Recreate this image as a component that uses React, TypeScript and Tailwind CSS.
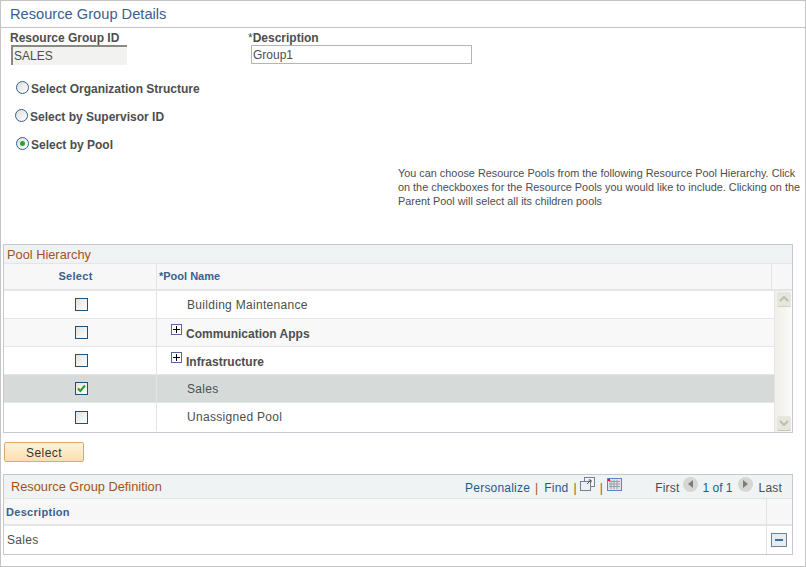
import * as React from 'react';

const pools = [
  { name: 'Building Maintenance', bold: false, tree: false, checked: false },
  { name: 'Communication Apps', bold: true, tree: true, checked: false },
  { name: 'Infrastructure', bold: true, tree: true, checked: false },
  { name: 'Sales', bold: false, tree: false, checked: true },
  { name: 'Unassigned Pool', bold: false, tree: false, checked: false },
];

function Radio({ label, checked, className }: { label: string; checked?: boolean; className?: string }) {
  return (
    <div className={'flex h-[14px] items-center ' + className}>
      <span className="mt-[-2px] flex h-[13px] w-[13px] items-center justify-center rounded-full border border-[#2f5f8f] bg-gradient-to-br from-[#dededa] to-white">
        {checked && <span className="h-[5px] w-[5px] rounded-full bg-[#2aa52a]" />}
      </span>
      <span className="ml-[2px] mt-[1px] text-xs font-bold text-[#4d4d4d]">{label}</span>
    </div>
  );
}

function Checkbox({ checked }: { checked: boolean }) {
  return (
    <span className="flex h-[13px] w-[13px] items-center justify-center border border-[#1f5078] bg-gradient-to-br from-[#e2e2df] to-white">
      {checked && (
        <svg width="9" height="9" viewBox="0 0 9 9">
          <path d="M1 4.5 L3.3 7 L8 1.5" fill="none" stroke="#22a02a" strokeWidth="2" />
        </svg>
      )}
    </span>
  );
}

function TreeBox() {
  return (
    <svg width="11" height="11" viewBox="0 0 11 11" className="mt-[-6px] shrink-0">
      <rect x="0.5" y="0.5" width="10" height="10" fill="#fff" stroke="#5b62a8" />
      <path d="M2 5.5 H9 M5.5 2 V9" stroke="#000" />
    </svg>
  );
}

function ScrollBar() {
  return (
    <div className="flex w-[18px] flex-col items-center justify-between border-l border-[#e5e5e5] bg-gradient-to-r from-[#f0efe8] to-[#fbfbf8] py-[1px]">
      <div className="flex h-[15px] w-[14px] items-center justify-center rounded-[2px] border-b border-[#cfd0c0] bg-[#e6e6dd]">
        <svg width="10" height="6" viewBox="0 0 10 6">
          <path d="M1 5 L5 1 L9 5" fill="none" stroke="#bcbdb4" strokeWidth="2" />
        </svg>
      </div>
      <div className="flex h-[15px] w-[14px] items-center justify-center rounded-[2px] border-b border-[#c8c9a8] bg-[#e6e6dd]">
        <svg width="10" height="6" viewBox="0 0 10 6">
          <path d="M1 1 L5 5 L9 1" fill="none" stroke="#bcbdb4" strokeWidth="2" />
        </svg>
      </div>
    </div>
  );
}

function PoolGrid() {
  return (
    <div className="ml-[1px] mt-[36px] w-[790px] border border-[#c4cad0]">
      <div className="flex h-[18px] items-center bg-[#eff3f4] pl-[3px] pt-[2px] text-[12.8px] text-[#a5521a]">
        Pool Hierarchy
      </div>
      <div className="flex h-[26px] items-center border-t border-[#e3e5e6] bg-[#f7f7f7] text-[11px] font-bold text-[#39608e]">
        <div className="w-[152px] pr-[9px] text-center tracking-[0.3px]">Select</div>
        <div className="flex h-full flex-1 items-center border-x border-[#e3e3e3] pl-[2px]">*Pool Name</div>
        <div className="w-[20px]" />
      </div>
      <div className="flex border-t-2 border-[#e3e5e6]">
        <div className="flex-1">
          {pools.map((p, i) => (
            <div
              key={p.name}
              className={
                'flex h-[28px] items-center border-b border-[#e3e5e6] last:h-[29px] last:border-b-0 last:pb-[1px] ' +
                (p.checked ? 'bg-[#d6dbd9]' : i % 2 === 1 ? 'bg-[#f8f8f8]' : 'bg-white')
              }
            >
              <div className="w-[152px] pl-[71px]">
                <Checkbox checked={p.checked} />
              </div>
              <div
                className={
                  'flex h-full flex-1 items-center border-l border-[#e3e3e3] text-xs text-[#4d4d4d] ' +
                  (p.tree ? 'pl-[14px]' : 'pl-[30px]')
                }
              >
                {p.tree && <TreeBox />}
                <span className={p.bold ? 'ml-[4px] mt-[3px] font-bold' : 'tracking-[0.3px]'}>{p.name}</span>
              </div>
            </div>
          ))}
        </div>
        <ScrollBar />
      </div>
    </div>
  );
}

function DefinitionGrid() {
  return (
    <div className="ml-[1px] mt-[12px] w-[790px] border border-[#c4cad0]">
      <div className="flex h-[23px] items-center bg-[#eff3f4] pl-[7px]">
        <span className="text-[12.8px] text-[#a5521a]">Resource Group Definition</span>
        <div className="ml-auto flex items-center pt-[2px] text-xs tracking-[0.2px] text-[#1f5a8e]">
          <span>Personalize</span>
          <span className="ml-[5px] mr-[6px] text-[#a5521a]">|</span>
          <span>Find</span>
          <span className="ml-[5px] mr-[3px] text-[#a5521a]">|</span>
          <svg width="15" height="14" viewBox="0 0 15 14" className="mt-[-7px]">
            <rect x="4.5" y="0.5" width="10" height="9" fill="#f4f6f8" stroke="#6f8398" />
            <rect x="0.5" y="4.5" width="10" height="9" fill="#eef1f3" stroke="#6f8398" />
            <path d="M7 7 L11 3 M8.5 3 H11 V5.5" fill="none" stroke="#555" />
          </svg>
          <span className="ml-[5px] mr-[4px] text-[#a5521a]">|</span>
          <svg width="15" height="13" viewBox="0 0 15 13" className="mt-[-7px]">
            <rect x="0.5" y="0.5" width="14" height="12" fill="#dfe3ea" stroke="#5b86c4" />
            <path d="M2 3.5 H13 M2 6 H13 M2 8.5 H13 M4 2 V11 M7 2 V11 M10 2 V11" stroke="#9aa0a8" />
            <rect x="1" y="1" width="2" height="2" fill="#e8101a" />
          </svg>
          <span className="ml-[33px] text-[#4d4d4d]">First</span>
          <span className="ml-[4px] mt-[-7px] flex h-[15px] w-[15px] items-center justify-center rounded-full bg-[#d6d6d2]">
            <span className="h-0 w-0 border-y-[4px] border-r-[5px] border-y-transparent border-r-[#7c7c7c]" />
          </span>
          <span className="ml-[4px] tracking-normal">1 of 1</span>
          <span className="ml-[5px] mt-[-7px] flex h-[15px] w-[15px] items-center justify-center rounded-full bg-[#d6d6d2]">
            <span className="h-0 w-0 border-y-[4px] border-l-[5px] border-y-transparent border-l-[#7c7c7c]" />
          </span>
          <span className="ml-[6px] mr-[10px] text-[#4d4d4d]">Last</span>
        </div>
      </div>
      <div className="flex h-[26px] items-center border-t border-[#e3e5e6] bg-[#f7f7f7] text-[11px] font-bold tracking-[0.3px] text-[#39608e]">
        <div className="flex-1 pl-[2px] pt-[2px]">Description</div>
        <div className="h-full w-[26px] border-l border-[#e3e3e3]" />
      </div>
      <div className="flex h-[30px] items-center border-t-2 border-[#e3e5e6] bg-white text-xs tracking-[0.3px] text-[#4d4d4d]">
        <div className="flex-1 pl-[3px]">Sales</div>
        <div className="flex h-full w-[26px] items-center border-l border-[#e3e3e3] pl-[4px]">
          <span className="flex h-[14px] w-[16px] items-center justify-center border border-[#6b8296] bg-[#e6ecf0]">
            <span className="h-[2px] w-[8px] bg-[#3a6ea5]" />
          </span>
        </div>
      </div>
    </div>
  );
}

export default function App() {
  return (
    <div className="h-[567px] w-[806px] border border-[#c4c4c4] bg-white font-['Liberation_Sans',Arial,sans-serif]">
      <div className="flex h-[27px] items-center border-b border-[#c4c4c4] pl-[9px] text-[14.67px] text-[#39608e]">
        Resource Group Details
      </div>

      <div className="pl-[1px]">
        <div className="flex">
          <div className="ml-[8px] w-[238px]">
            <div className="mt-[4px] text-xs font-bold leading-[13px] text-[#4d4d4d]">Resource Group ID</div>
            <div className="ml-[1px] flex h-[20px] w-[116px] items-center border-l-2 border-t-2 border-[#8a8a80] bg-[#f2f2f0] pl-[1px] text-xs text-[#4d4d4d]">
              SALES
            </div>
          </div>
          <div>
            <div className="mt-[4px] text-xs font-bold leading-[13px] text-[#4d4d4d]">
              <span className="font-normal">*</span>Description
            </div>
            <div className="ml-[3px] flex h-[19px] w-[221px] items-center border border-[#b5b5b5] pl-[1px] text-xs text-[#4d4d4d]">
              Group1
            </div>
          </div>
        </div>

        <Radio label="Select Organization Structure" className="ml-[14px] mt-[16px]" />
        <Radio label="Select by Supervisor ID" className="ml-[13px] mt-[14px]" />
        <Radio label="Select by Pool" className="ml-[14px] mt-[14px]" checked />

        <p className="ml-[396px] mt-[15px] w-[405px] text-[10.87px] leading-[14px] text-[#4d4d4d]">
          You can choose Resource Pools from the following Resource Pool Hierarchy. Click on the checkboxes for the
          Resource Pools you would like to include. Clicking on the Parent Pool will select all its children pools
        </p>

        <PoolGrid />

        <button className="ml-[2px] mt-[9px] block h-[20px] w-[80px] rounded-[2px] border border-[#dca96c] bg-gradient-to-b from-[#fff3dc] to-[#fbdfae] pt-[1px] text-xs tracking-[0.4px] text-[#333]">
          Select
        </button>

        <DefinitionGrid />
      </div>
    </div>
  );
}
